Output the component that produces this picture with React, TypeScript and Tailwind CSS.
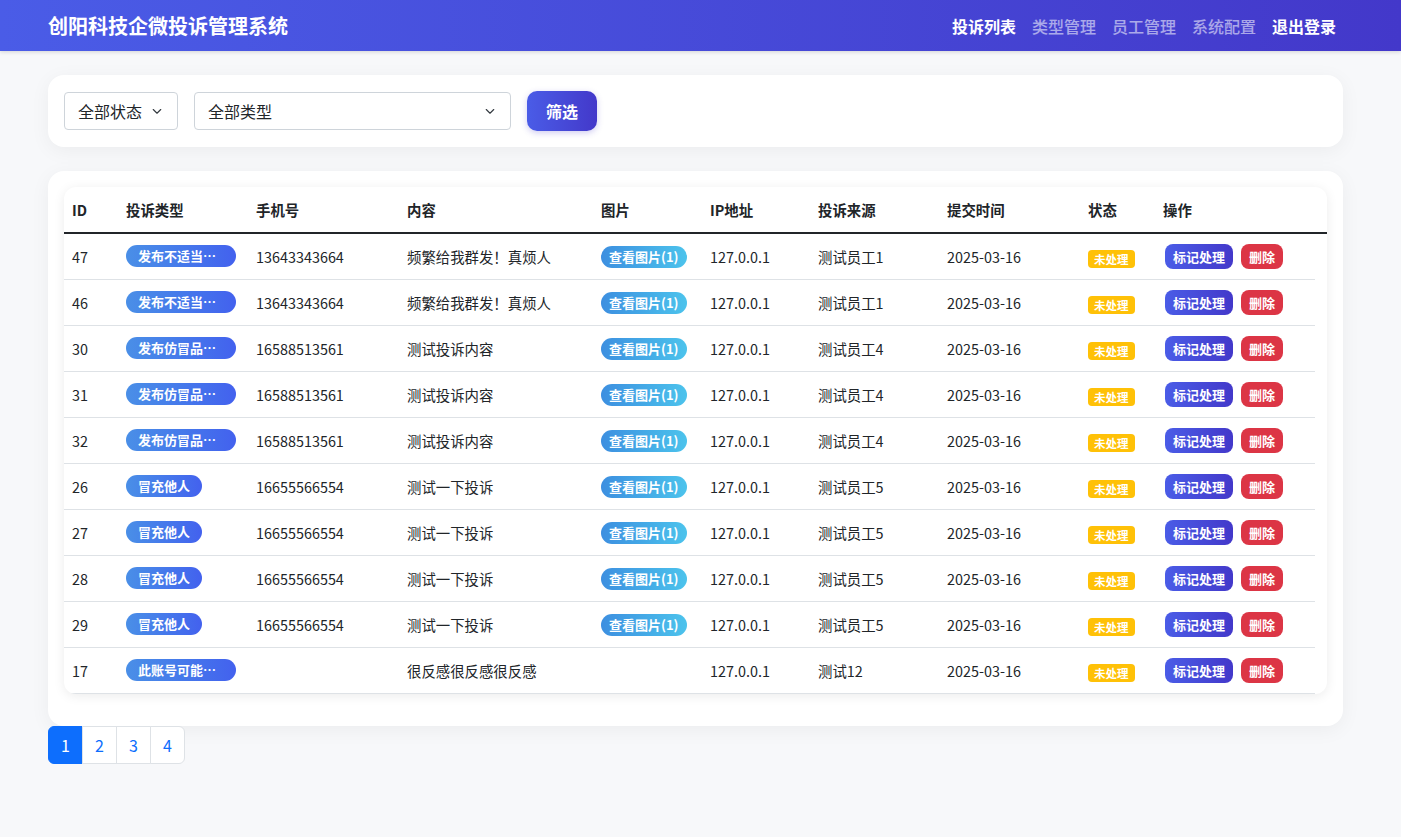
import React from "react";

type Row = {
  id: string;
  type: string;
  phone: string;
  content: string;
  img: boolean;
  source: string;
};

const rows: Row[] = [
  { id: "47", type: "发布不适当信息", phone: "13643343664", content: "频繁给我群发！真烦人", img: true, source: "测试员工1" },
  { id: "46", type: "发布不适当信息", phone: "13643343664", content: "频繁给我群发！真烦人", img: true, source: "测试员工1" },
  { id: "30", type: "发布仿冒品信息", phone: "16588513561", content: "测试投诉内容", img: true, source: "测试员工4" },
  { id: "31", type: "发布仿冒品信息", phone: "16588513561", content: "测试投诉内容", img: true, source: "测试员工4" },
  { id: "32", type: "发布仿冒品信息", phone: "16588513561", content: "测试投诉内容", img: true, source: "测试员工4" },
  { id: "26", type: "冒充他人", phone: "16655566554", content: "测试一下投诉", img: true, source: "测试员工5" },
  { id: "27", type: "冒充他人", phone: "16655566554", content: "测试一下投诉", img: true, source: "测试员工5" },
  { id: "28", type: "冒充他人", phone: "16655566554", content: "测试一下投诉", img: true, source: "测试员工5" },
  { id: "29", type: "冒充他人", phone: "16655566554", content: "测试一下投诉", img: true, source: "测试员工5" },
  { id: "17", type: "此账号可能被盗用", phone: "", content: "很反感很反感很反感", img: false, source: "测试12" },
];

const cols = "grid grid-cols-[54px_130px_151px_194px_109px_108px_129px_141px_75px_160px]";

function Chevron() {
  return (
    <svg width="16" height="12" viewBox="0 0 16 16" fill="none" className="shrink-0">
      <path d="m3 6 5 5 5-5" stroke="#343a40" strokeWidth="1.5" strokeLinecap="round" strokeLinejoin="round" />
    </svg>
  );
}

export default function App() {
  return (
    <div
      className="min-h-screen bg-[#f7f8fa] text-[#212529]"
      style={{ fontFamily: '"Noto Sans CJK SC", "Noto Sans", sans-serif' }}
    >
      <header className="h-[51px] bg-gradient-to-r from-[#4a5ce7] to-[#4338ca] flex items-center justify-between pl-12 pr-[65px] shadow-[0_1px_4px_rgba(0,0,0,0.15)]">
        <div className="text-white text-[20px] font-bold leading-none">创阳科技企微投诉管理系统</div>
        <nav className="flex items-center gap-4 text-[16px]">
          <span className="text-white font-bold">投诉列表</span>
          <span className="text-white/55 font-medium">类型管理</span>
          <span className="text-white/55 font-medium">员工管理</span>
          <span className="text-white/55 font-medium">系统配置</span>
          <span className="text-white font-bold">退出登录</span>
        </nav>
      </header>

      <main className="pl-12 pr-[58px] pt-6">
        <div className="bg-white rounded-2xl shadow-[0_4px_20px_rgba(0,0,0,0.05)] p-4 flex items-center mb-6">
          <div className="w-[114px] h-[38px] border border-[#ced4da] rounded-[4px] flex items-center justify-between pl-[13px] pr-[12px] text-[16px]">
            <span>全部状态</span>
            <Chevron />
          </div>
          <div className="ml-4 w-[317px] h-[38px] border border-[#ced4da] rounded-[4px] flex items-center justify-between pl-[13px] pr-[12px] text-[16px]">
            <span>全部类型</span>
            <Chevron />
          </div>
          <button className="ml-4 w-[70px] h-[40px] rounded-[10px] bg-gradient-to-r from-[#4a5ce7] to-[#4338ca] text-white font-bold text-[16px] flex items-center justify-center shadow-[0_2px_6px_rgba(67,56,202,0.25)]">
            筛选
          </button>
        </div>

        <div className="bg-white rounded-2xl shadow-[0_4px_20px_rgba(0,0,0,0.05)] p-4">
          <div className="rounded-xl shadow-[0_2px_12px_rgba(0,0,0,0.08)] mb-4 overflow-hidden">
            <div className={`${cols} h-[47px] border-b-2 border-[#212529] items-center text-[14.4px] font-bold`}>
              <div className="px-2">ID</div>
              <div className="px-2">投诉类型</div>
              <div className="px-2">手机号</div>
              <div className="px-2">内容</div>
              <div className="px-2">图片</div>
              <div className="px-2">IP地址</div>
              <div className="px-2">投诉来源</div>
              <div className="px-2">提交时间</div>
              <div className="px-2">状态</div>
              <div className="px-2">操作</div>
            </div>
            {rows.map((r) => (
              <div key={r.id} className={`${cols} w-[1251px] h-[46px] border-b border-[#dee2e6] items-center text-[14.4px]`}>
                <div className="px-2">{r.id}</div>
                <div className="px-2">
                  <span className="inline-block max-w-[110px] truncate align-middle rounded-full bg-gradient-to-r from-[#4a8fe7] to-[#4361ee] text-white text-[13px] font-bold leading-[22px] px-3 -translate-y-[2px]">
                    {r.type}
                  </span>
                </div>
                <div className="px-2">{r.phone}</div>
                <div className="px-2">{r.content}</div>
                <div className="px-2">
                  {r.img && (
                    <span className="inline-block rounded-full bg-gradient-to-r from-[#3d8fe0] to-[#4cc3ec] text-white text-[13px] font-bold leading-[22px] px-2">
                      查看图片(1)
                    </span>
                  )}
                </div>
                <div className="px-2">127.0.0.1</div>
                <div className="px-2">{r.source}</div>
                <div className="px-2">2025-03-16</div>
                <div className="px-2">
                  <span className="inline-block rounded-[4px] bg-[#ffc107] text-white text-[11.5px] font-bold leading-[18px] px-[6px] translate-y-[1px]">
                    未处理
                  </span>
                </div>
                <div className="px-2 flex items-center gap-2 pl-[10px]">
                  <span className="inline-block rounded-lg bg-gradient-to-r from-[#4a5ce7] to-[#4338ca] text-white text-[13px] font-bold leading-[25px] px-2">
                    标记处理
                  </span>
                  <span className="inline-block rounded-lg bg-[#dc3545] text-white text-[13px] font-bold leading-[25px] px-2">
                    删除
                  </span>
                </div>
              </div>
            ))}
          </div>
        </div>

        <div className="flex text-[16px] text-[#0d6efd]">
          <div className="w-[35px] h-[38px] flex items-center justify-center bg-[#0d6efd] text-white border border-[#0d6efd] rounded-l-[6px]">1</div>
          <div className="w-[35px] h-[38px] flex items-center justify-center bg-white border border-[#dee2e6] -ml-px">2</div>
          <div className="w-[35px] h-[38px] flex items-center justify-center bg-white border border-[#dee2e6] -ml-px">3</div>
          <div className="w-[35px] h-[38px] flex items-center justify-center bg-white border border-[#dee2e6] -ml-px rounded-r-[6px]">4</div>
        </div>
      </main>
    </div>
  );
}
